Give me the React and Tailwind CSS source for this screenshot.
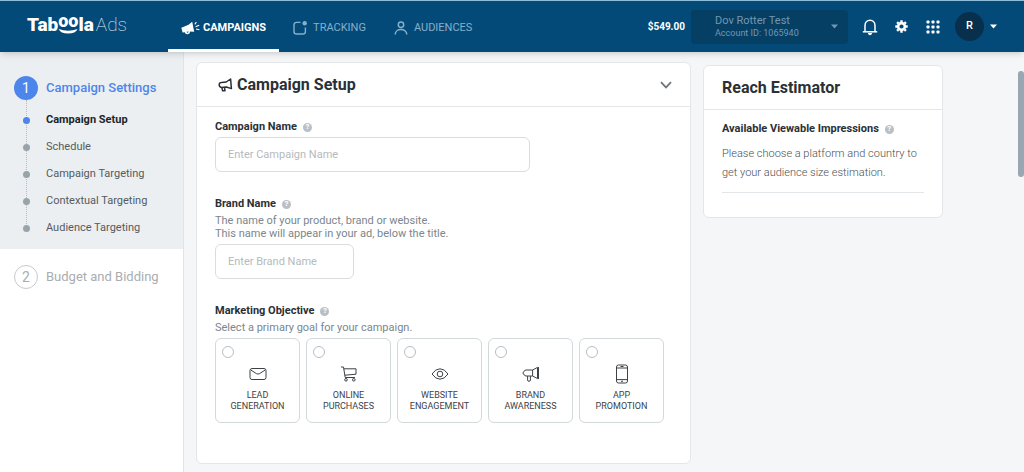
import { useState } from 'react'

const STEPS = ['Campaign Setup', 'Schedule', 'Campaign Targeting', 'Contextual Targeting', 'Audience Targeting']

const OBJECTIVES = [
  { id: 'lead',    lines: ['LEAD', 'GENERATION'],    Icon: MailIcon },
  { id: 'online',  lines: ['ONLINE', 'PURCHASES'],   Icon: CartIcon },
  { id: 'website', lines: ['WEBSITE', 'ENGAGEMENT'], Icon: EyeIcon },
  { id: 'brand',   lines: ['BRAND', 'AWARENESS'],    Icon: HornIcon },
  { id: 'app',     lines: ['APP', 'PROMOTION'],      Icon: PhoneIcon },
]

function MailIcon() {
  return (
    <svg width="18" height="20" viewBox="0 0 18 20" fill="none" stroke="currentColor" strokeWidth="1">
      <rect x="1" y="4.5" width="16" height="11" rx="2" />
      <path d="M1.8 6 L7.4 9.6 Q9 10.6 10.6 9.6 L16.2 6" />
    </svg>
  )
}

function CartIcon() {
  return (
    <svg width="18" height="20" viewBox="0 0 18 20" fill="none" stroke="currentColor" strokeWidth="1">
      <path d="M1 3 H3.5 L5.2 13.5 H15" />
      <path d="M3.8 4.8 H16 V10.2 L4.8 11.2" />
      <circle cx="6" cy="15.8" r="1.3" />
      <circle cx="13.8" cy="15.8" r="1.3" />
    </svg>
  )
}

function EyeIcon() {
  return (
    <svg width="18" height="20" viewBox="0 0 18 20" fill="none" stroke="currentColor" strokeWidth="1">
      <path d="M1 10 Q4.5 4.8 9 4.8 T17 10 Q13.5 15.2 9 15.2 T1 10 Z" />
      <circle cx="9" cy="10" r="2.8" />
    </svg>
  )
}

function HornIcon() {
  return (
    <svg width="18" height="20" viewBox="0 0 18 20" fill="none" stroke="currentColor" strokeWidth="1" strokeLinejoin="round">
      <path d="M10.6 6 H4 Q2.4 6 2.2 7.6 L1 8.4 V9.8 L2.2 10.4 Q2.4 12 4 12 H10.6 Z" />
      <path d="M10.6 6 L15.5 3.4 V14.6 L10.6 12 M16.5 3 V15" />
      <path d="M5.6 12 V16 Q5.6 17.3 7 17.3 T8.4 16 V12" />
    </svg>
  )
}

function PhoneIcon() {
  return (
    <svg width="18" height="20" viewBox="0 0 18 20" fill="none" stroke="currentColor" strokeWidth="1">
      <rect x="3.5" y="1" width="11" height="18" rx="2" />
      <path d="M3.5 4 H14.5 M3.5 15.6 H14.5 M7.5 2.5 H10.5" />
      <circle cx="9" cy="17.3" r="0.5" />
    </svg>
  )
}

function CampaignsIcon() {
  return (
    <svg width="19" height="14" viewBox="0 0 19 14" fill="currentColor">
      <path d="M0.3 6.8 L7.6 3.8 L11.2 0.8 L13.2 10.8 L9.2 10.6 Q9 13.4 6.2 13.2 Q4.2 13 3.8 11.2 L1.6 11.6 Z" />
      <path d="M5.6 10.8 L7.6 10.5 Q7.6 11.6 6.7 11.7 T5.6 10.8 Z" fill="#034a79" />
      <path d="M13.8 3.4 L15.4 1 M14.6 5.8 L18.2 4.2 M15 8 L18.4 8.8" fill="none" stroke="currentColor" strokeWidth="1.1" />
    </svg>
  )
}

function TrackingIcon() {
  return (
    <svg width="14" height="14" viewBox="0 0 14 14" fill="none" stroke="currentColor" strokeWidth="1.4">
      <path d="M7.5 1.4 H3.6 Q1 1.4 1 4 V10.4 Q1 13 3.6 13 H9.8 Q12.4 13 12.4 10.4 V6.4" />
      <circle cx="11.7" cy="2.2" r="2.2" fill="currentColor" stroke="none" />
    </svg>
  )
}

function AudiencesIcon() {
  return (
    <svg width="14" height="14" viewBox="0 0 14 14" fill="none" stroke="currentColor" strokeWidth="1.5">
      <circle cx="7" cy="3.8" r="2.7" />
      <path d="M1.2 13.6 C1.2 6.8 12.8 6.8 12.8 13.6" />
    </svg>
  )
}

function TitleHornIcon() {
  return (
    <svg width="15" height="14" viewBox="0 0 15 14" fill="none" stroke="currentColor" strokeWidth="1.5" strokeLinejoin="round">
      <path d="M12.6 1 L13.4 10.6 L8.4 9 L3.4 9.4 Q1.2 9 1.2 6.8 T3.4 4.6 L8.2 4 Z" />
      <path d="M3.8 9.4 L4.6 12.8 H7 L6.4 9.2" />
    </svg>
  )
}

function Caret() {
  return (
    <svg width="7" height="5" viewBox="0 0 7 5" fill="currentColor">
      <path d="M0 0.5 H7 L3.5 4.5 Z" />
    </svg>
  )
}

function HelpDot() {
  return (
    <span className="flex h-[9px] w-[9px] shrink-0 items-center justify-center rounded-full bg-[#b9bfc4] text-[8px] leading-none font-bold text-white">
      ?
    </span>
  )
}

function Logo() {
  return (
    <a href="#home" className="flex items-baseline pb-1 text-[19px] leading-6 font-black text-white">
      <span>Tab</span>
      <span className="relative text-lg leading-6">
        <span className="relative -top-1">oo</span>
        <svg className="absolute bottom-0.5 left-0 w-full" height="7" viewBox="0 0 20 7" fill="currentColor">
          <path d="M0.5 1 Q10 4.6 19.5 1 Q17.5 5.6 10 5.6 T0.5 1 Z" />
        </svg>
      </span>
      <span>la</span>
      <span className="ml-0.5 font-thin text-[#e3edf4]">Ads</span>
    </a>
  )
}

function NavTab({ label, Icon, active }) {
  return (
    <a
      href={`#${label.toLowerCase()}`}
      className={`flex items-center border-b-[3px] pt-1.5 text-[11px] ${
        active ? 'gap-[3px] border-white px-[13px] font-bold text-white' : 'gap-1.5 border-transparent px-3.5 text-[#86afc9]'
      }`}
    >
      <Icon />
      {label}
    </a>
  )
}

function Header() {
  return (
    <header className="z-10 flex h-[52px] shrink-0 items-stretch border-t border-[#8fbcd8] bg-[#034a79] pl-[27px] shadow-md">
      <div className="flex w-[141px] items-center">
        <Logo />
      </div>
      <nav className="flex">
        <NavTab label="CAMPAIGNS" Icon={CampaignsIcon} active />
        <NavTab label="TRACKING" Icon={TrackingIcon} />
        <NavTab label="AUDIENCES" Icon={AudiencesIcon} />
      </nav>

      <div className="ml-auto flex items-center pr-[27px] text-white">
        <span className="mr-1.5 text-[10px] font-bold">$549.00</span>
        <button
          type="button"
          className="flex h-[34px] w-[157px] items-center justify-between rounded-sm bg-[#063f64] pr-2.5 pl-6 text-left text-[#7197b1]"
        >
          <span className="flex flex-col">
            <span className="text-[11px] leading-[13px]">Dov Rotter Test</span>
            <span className="text-[9px] leading-[13px]">Account ID: 1065940</span>
          </span>
          <Caret />
        </button>

        {/* Notifications */}
        <button type="button" aria-label="Notifications" className="ml-3.5">
          <svg width="16" height="18" viewBox="0 0 16 18" fill="none" stroke="currentColor" strokeWidth="1.5">
            <path d="M3 13.6 V7.4 C3 0.4 13 0.4 13 7.4 V13.6" />
            <path d="M0.8 13.8 H15.2" />
            <path d="M5.8 15 H10.2 Q9.6 17.2 8 17.2 T5.8 15 Z" fill="currentColor" stroke="none" />
          </svg>
        </button>
        {/* Settings */}
        <button type="button" aria-label="Settings" className="ml-[17px]">
          <svg width="13" height="13" viewBox="0 0 13 13" fill="none" stroke="currentColor">
            <circle cx="6.5" cy="6.5" r="3.4" strokeWidth="2.6" />
            <path d="M6.5 0.3 V2 M6.5 11 V12.7 M0.3 6.5 H2 M11 6.5 H12.7 M2.1 2.1 L3.3 3.3 M9.7 9.7 L10.9 10.9 M2.1 10.9 L3.3 9.7 M9.7 3.3 L10.9 2.1" strokeWidth="2.4" />
          </svg>
        </button>
        {/* Apps */}
        <button type="button" aria-label="Apps" className="ml-[18px]">
          <svg width="14" height="14" viewBox="0 0 14 14" fill="currentColor">
            {[0, 5, 10].map((y) =>
              [0, 5, 10].map((x) => <rect key={`${x}-${y}`} x={x + 0.5} y={y + 0.5} width="3" height="3" rx="0.8" />)
            )}
          </svg>
        </button>
        {/* User */}
        <button type="button" className="ml-[15px] flex items-center gap-1.5">
          <span className="flex h-[29px] w-[29px] items-center justify-center rounded-full bg-[#082f4c] text-[11px] font-medium">R</span>
          <Caret />
        </button>
      </div>
    </header>
  )
}

function Sidebar() {
  return (
    <aside className="w-[184px] shrink-0 border-r border-[#e0e4e7] bg-white">
      <div className="bg-[#eceff1] pt-6 pb-[7px] pl-3.5">
        <a href="#settings" className="flex items-center gap-2 text-[13px] font-medium text-[#4c86ea]">
          <span className="flex h-6 w-6 items-center justify-center rounded-full bg-[#4c86ea] text-sm font-normal text-white">1</span>
          Campaign Settings
        </a>
        {/* Steps on a dotted rail */}
        <div className="relative">
          <div className="absolute top-0 bottom-[14px] left-3 border-l border-dotted border-[#b5bcc1]" />
          <ul className="pt-[7px]">
            {STEPS.map((step, i) => (
              <li key={step} className="flex h-[27px] items-center">
                <span className={`relative ml-[9px] h-[7px] w-[7px] rounded-full ${i === 0 ? 'bg-[#4c86ea]' : 'bg-[#98a4ab]'}`} />
                <a
                  href={`#step-${i}`}
                  className={`ml-4 text-[11px] ${i === 0 ? 'font-bold text-[#212529]' : 'text-[#555b60]'}`}
                >
                  {step}
                </a>
              </li>
            ))}
          </ul>
        </div>
      </div>
      <a href="#budget" className="flex items-center gap-2 py-4 pl-3.5 text-[13px] text-[#a9adb0]">
        <span className="flex h-6 w-6 items-center justify-center rounded-full border border-[#c6c9cb] text-sm">2</span>
        Budget and Bidding
      </a>
    </aside>
  )
}

function ObjectiveCard({ objective, checked, onSelect }) {
  const { id, lines, Icon } = objective
  return (
    <label className="flex h-[85px] w-[85px] flex-col rounded-md border border-[#d3d8db] text-[#3d4246]">
      <input
        type="radio"
        name="objective"
        value={id}
        checked={checked}
        onChange={() => onSelect(id)}
        className="mt-[7px] ml-1.5 h-3 w-3 shrink-0 appearance-none rounded-full border border-[#b9bec2] checked:border-4 checked:border-[#4c86ea]"
      />
      <span className="mt-1.5 flex justify-center">
        <Icon />
      </span>
      <span className="mt-1.5 text-center text-[9px] leading-[11px]">
        {lines[0]}
        <br />
        {lines[1]}
      </span>
    </label>
  )
}

function SetupCard() {
  const [name,      setName]      = useState('')
  const [brand,     setBrand]     = useState('')
  const [objective, setObjective] = useState(null)

  return (
    <section className="mt-2.5 mb-2 w-[495px] rounded-md border border-[#e3e7e9] bg-white">
      <div className="flex h-11 items-center border-b border-[#e3e7e9] pr-[18px] pl-[21px] text-[#2b3035]">
        <TitleHornIcon />
        <h1 className="ml-1 text-base font-bold">Campaign Setup</h1>
        <button type="button" aria-label="Collapse" className="ml-auto text-[#6d7478]">
          <svg width="12" height="8" viewBox="0 0 12 8" fill="none" stroke="currentColor" strokeWidth="1.7">
            <path d="M1 1.2 L6 6.4 L11 1.2" />
          </svg>
        </button>
      </div>

      <form className="flex flex-col px-[18px] pt-3 pb-10 text-[11px]">
        {/* Campaign name */}
        <div className="flex items-center gap-1.5">
          <label htmlFor="campaign-name" className="leading-4 font-bold text-[#2b3035]">Campaign Name</label>
          <HelpDot />
        </div>
        <input
          id="campaign-name"
          value={name}
          onChange={(e) => setName(e.target.value)}
          placeholder="Enter Campaign Name"
          className="mt-0.5 h-[35px] w-[315px] rounded-md border border-[#d9dddf] px-3 placeholder:text-[#b4babe]"
        />

        {/* Brand name */}
        <div className="mt-6 flex items-center gap-1.5">
          <label htmlFor="brand-name" className="leading-4 font-bold text-[#2b3035]">Brand Name</label>
          <HelpDot />
        </div>
        <p className="mt-0.5 leading-[13px] text-[#7b868d]">
          The name of your product, brand or website.
          <br />
          This name will appear in your ad, below the title.
        </p>
        <input
          id="brand-name"
          value={brand}
          onChange={(e) => setBrand(e.target.value)}
          placeholder="Enter Brand Name"
          className="mt-1 h-[35px] w-[139px] rounded-md border border-[#d9dddf] px-3 placeholder:text-[#b4babe]"
        />

        {/* Marketing objective */}
        <fieldset className="mt-6">
          <legend className="flex items-center gap-1.5 leading-4 font-bold text-[#2b3035]">
            Marketing Objective
            <HelpDot />
          </legend>
          <p className="mt-0.5 leading-[13px] text-[#7b868d]">Select a primary goal for your campaign.</p>
          <div className="mt-1 flex gap-1.5">
            {OBJECTIVES.map((o) => (
              <ObjectiveCard key={o.id} objective={o} checked={objective === o.id} onSelect={setObjective} />
            ))}
          </div>
        </fieldset>
      </form>
    </section>
  )
}

function ReachCard() {
  return (
    <section className="mt-[13px] w-[240px] rounded-md border border-[#e3e7e9] bg-white">
      <div className="flex h-11 items-center border-b border-[#e3e7e9] px-[18px]">
        <h2 className="text-base font-bold text-[#2b3035]">Reach Estimator</h2>
      </div>
      <div className="px-[18px] pt-[11px] pb-6 text-[11px]">
        <h3 className="flex items-center gap-1.5 leading-4 font-bold text-[#2b3035]">
          Available Viewable Impressions
          <HelpDot />
        </h3>
        <p className="mt-[7px] border-b border-[#e3e7e9] pb-2.5 leading-[19px] font-light text-[#4a5054]">
          Please choose a platform and country to get your audience size estimation.
        </p>
      </div>
    </section>
  )
}

export default function App() {
  return (
    <div className="flex h-screen flex-col overflow-hidden bg-[#f4f6f8] font-['Roboto',sans-serif]">
      <Header />
      <div className="flex min-h-0 flex-1">
        <Sidebar />
        <main className="relative flex flex-1 items-start gap-3 overflow-hidden pl-3">
          <SetupCard />
          <ReachCard />
          <div className="absolute top-[19px] right-0 h-[106px] w-1.5 rounded-full bg-[#98a8b3]" />
        </main>
      </div>
    </div>
  )
}
